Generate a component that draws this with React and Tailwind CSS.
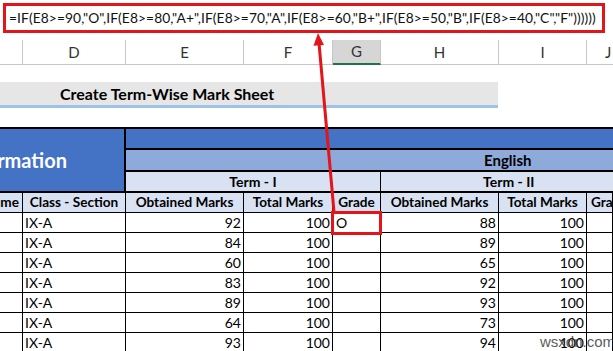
export default function App() {
  const rows = [
    [92, 100, "O", 88, 100],
    [84, 100, "", 89, 100],
    [60, 100, "", 65, 100],
    [83, 100, "", 92, 100],
    [89, 100, "", 93, 100],
    [64, 100, "", 73, 100],
    [93, 100, "", 94, 100],
  ];
  const cols = "grid-cols-[23px_103px_118px_89px_48px_118px_88px_26px]";
  const formula =
    '=IF(E8>=90,"O",IF(E8>=80,"A+",IF(E8>=70,"A",IF(E8>=60,"B+",IF(E8>=50,"B",IF(E8>=40,"C","F"))))))';
  const hdr = ["", "D", "E", "F", "G", "H", "I", "J"];
  const sub = "bg-[#d9e2f3] border-r border-b border-black flex items-center overflow-hidden whitespace-nowrap font-bold text-[13.6px] text-black";
  const cell = "border-r border-b border-black flex items-center overflow-hidden whitespace-nowrap text-[14px] text-black";

  return (
    <div className="relative w-[613px] h-[351px] overflow-hidden bg-white font-['Lato',sans-serif]">
      {/* formula bar */}
      <div className="h-[40px] pt-[3px] pl-[3px]">
        <div className="w-[602px] h-[30px] border-[3px] border-[#e3151b] flex items-center pl-[3px] overflow-hidden whitespace-nowrap text-[13.8px] tracking-[0.08px] text-[#111]">
          {formula}
        </div>
      </div>

      {/* column headers */}
      <div className={`grid ${cols} h-[22px]`}>
        {hdr.map((h, i) => (
          <div
            key={i}
            className={
              h === "G"
                ? "bg-[#d6d6d6] border-r border-[#c6c6c6] border-b-2 border-b-[#217346] flex items-center justify-center text-[15px] text-[#333]"
                : h === "J"
                ? "border-b border-[#c6c6c6] flex items-center pl-[18px] text-[15px] text-[#333]"
                : "border-r border-b border-[#c6c6c6] flex items-center justify-center text-[15px] text-[#333]"
            }
          >
            {h}
          </div>
        ))}
      </div>

      <div className="h-[20px]" />

      {/* title */}
      <div className="w-[498px] h-[26px] bg-[#e7e6e6] border-b-[3px] border-[#9dc3e6] flex items-center pl-[60px] font-bold text-[16px] text-black">
        Create Term-Wise Mark Sheet
      </div>

      <div className="h-[19px]" />

      {/* table */}
      <div className={`grid ${cols} grid-rows-[21px_22px_21px_20px_repeat(7,20px)] border-t-2 border-black`}>
        <div className="col-span-2 row-span-3 bg-[#4472c4] border-r-2 border-b-2 border-black flex items-center justify-end pr-[57px] overflow-hidden whitespace-nowrap text-white font-bold text-[20px]">
          Student Information
        </div>
        <div className="col-span-6 bg-[#4472c4] border-b-2 border-black" />
        <div className="col-span-6 bg-[#8eaadb] border-b-2 border-black flex items-center pl-[358px] font-bold text-[15px] text-black">
          English
        </div>
        <div className="col-span-3 bg-[#d9e2f3] border-r border-b-2 border-black flex items-center justify-center font-bold text-[14px] text-black">
          Term - I
        </div>
        <div className="col-span-3 bg-[#d9e2f3] border-b-2 border-black flex items-center pl-[102px] font-bold text-[14px] text-black">
          Term - II
        </div>

        <div className={`${sub} justify-end pr-[3px]`}>Name</div>
        <div className={`${sub} justify-center`}>Class - Section</div>
        <div className={`${sub} justify-center`}>Obtained Marks</div>
        <div className={`${sub} justify-center`}>Total Marks</div>
        <div className={`${sub} justify-center`}>Grade</div>
        <div className={`${sub} justify-center`}>Obtained Marks</div>
        <div className={`${sub} justify-center`}>Total Marks</div>
        <div className={`${sub} pl-[4px]`}>Grade</div>

        {rows.map((r, i) => (
          <div key={i} className="contents">
            <div className={cell} />
            <div className={`${cell} pl-[2px]`}>IX-A</div>
            <div className={`${cell} justify-end pr-[2px]`}>{r[0]}</div>
            <div className={`${cell} justify-end pr-[2px]`}>{r[1]}</div>
            <div className={`${cell} pl-[3px]`}>{r[2]}</div>
            <div className={`${cell} justify-end pr-[2px]`}>{r[3]}</div>
            <div className={`${cell} justify-end pr-[2px]`}>{r[4]}</div>
            <div className={cell} />
          </div>
        ))}
      </div>

      {/* annotation: red box around G8 */}
      <div className="absolute left-[331px] top-[211px] w-[51px] h-[24px] border-[3px] border-[#e3151b]" />

      {/* arrow */}
      <svg className="absolute left-0 top-0" width="613" height="351" viewBox="0 0 613 351">
        <line x1="334" y1="212" x2="319" y2="43" stroke="#e3151b" strokeWidth="3" />
        <polygon points="318,33 324,45 313.5,45.8" fill="#e3151b" />
      </svg>

      {/* watermark */}
      <div className="absolute left-[540px] top-[333px] leading-[18px] text-[15px] text-[#333] opacity-80 font-['Liberation_Sans',sans-serif]">
        wsxdn.com
      </div>
    </div>
  );
}
